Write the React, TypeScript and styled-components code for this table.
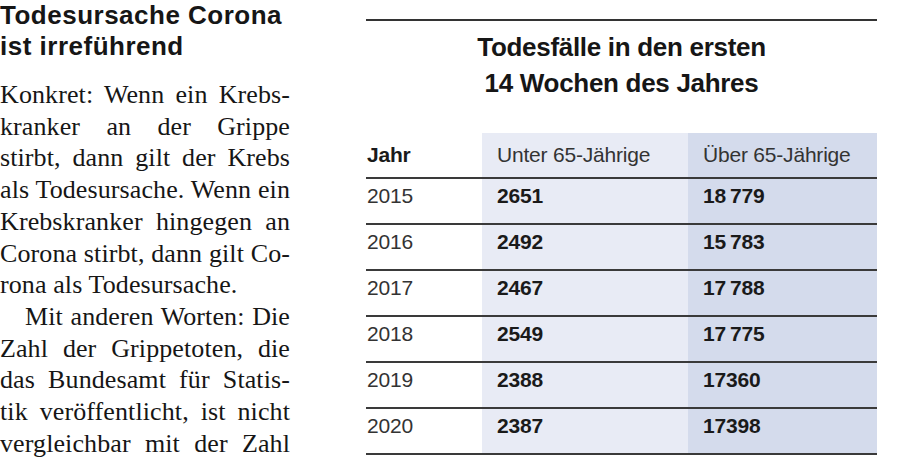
import React from "react";
import styled, { createGlobalStyle } from "styled-components";

const Global = createGlobalStyle`
  html, body { margin: 0; padding: 0; background: #ffffff; }
  body { width: 916px; height: 472px; overflow: hidden; }
`;

const Page = styled.div`
  display: flex;
  align-items: flex-start;
  width: 916px;
  height: 472px;
  background: #ffffff;
`;

const Article = styled.article`
  flex: none;
  width: 290px;
  color: #161616;
`;

const Headline = styled.h2`
  margin: 0;
  font-family: "Liberation Sans", Arial, sans-serif;
  font-weight: 700;
  font-size: 26px;
  line-height: 31px;
  letter-spacing: 0.5px;
  color: #161616;
`;

const Body = styled.div`
  margin-top: 17px;
  font-family: "Liberation Serif", "Times New Roman", serif;
  font-size: 26px;
  line-height: 31.7px;
  letter-spacing: 0.1px;
`;

const Paragraph = styled.p`
  margin: 0;
`;

const Line = styled.span<{ $last?: boolean; $indent?: boolean }>`
  display: block;
  white-space: nowrap;
  text-align: ${(p) => (p.$last ? "left" : "justify")};
  text-align-last: ${(p) => (p.$last ? "left" : "justify")};
  padding-left: ${(p) => (p.$indent ? "25px" : "0")};
`;

const Panel = styled.section`
  flex: none;
  margin-left: 76px;
  width: 511px;
  padding-top: 19px;
`;

const Rule = styled.div`
  height: 2px;
  background: #333333;
`;

const Title = styled.h1`
  margin: 8px 0 32px;
  text-align: center;
  font-family: "Liberation Sans", Arial, sans-serif;
  font-weight: 700;
  font-size: 26px;
  line-height: 36px;
  letter-spacing: -0.3px;
  color: #161616;
`;

const Table = styled.table`
  width: 100%;
  border-collapse: separate;
  border-spacing: 0;
  table-layout: fixed;
  font-family: "Liberation Sans", Arial, sans-serif;
  font-size: 21px;
  line-height: 20px;
  letter-spacing: -0.2px;
`;

const bg = ["transparent", "#e8ebf5", "#d4dbec"];

const Cell = styled.td<{ $col: number; $bold?: boolean; $head?: boolean }>`
  background: ${(p) => bg[p.$col]};
  padding: ${(p) => (p.$head ? "12px 0 12px" : "7px 0 17px")};
  padding-left: ${(p) => (p.$col === 0 ? "1px" : "15px")};
  border-bottom: 2px solid #3a3a3a;
  font-weight: ${(p) => (p.$bold ? 700 : 400)};
  color: ${(p) => (p.$bold ? "#1a1a1a" : "#333333")};
  white-space: nowrap;
  text-align: left;
`;

const rows: [string, string, string][] = [
  ["2015", "2651", "18\u2009779"],
  ["2016", "2492", "15\u2009783"],
  ["2017", "2467", "17\u2009788"],
  ["2018", "2549", "17\u2009775"],
  ["2019", "2388", "17360"],
  ["2020", "2387", "17398"],
];

export default function App() {
  return (
    <>
      <Global />
      <Page>
        <Article>
          <Headline>
            Todesursache Corona
            <br />
            ist irreführend
          </Headline>
          <Body>
            <Paragraph>
              <Line>Konkret: Wenn ein Krebs-</Line>
              <Line>kranker an der Grippe</Line>
              <Line>stirbt, dann gilt der Krebs</Line>
              <Line>als Todesursache. Wenn ein</Line>
              <Line>Krebskranker hingegen an</Line>
              <Line>Corona stirbt, dann gilt Co-</Line>
              <Line $last>rona als Todesursache.</Line>
            </Paragraph>
            <Paragraph>
              <Line $indent>Mit anderen Worten: Die</Line>
              <Line>Zahl der Grippetoten, die</Line>
              <Line>das Bundesamt für Statis-</Line>
              <Line>tik veröffentlicht, ist nicht</Line>
              <Line>vergleichbar mit der Zahl</Line>
            </Paragraph>
          </Body>
        </Article>
        <Panel>
          <Rule />
          <Title>
            Todesfälle in den ersten
            <br />
            14 Wochen des Jahres
          </Title>
          <Table>
            <colgroup>
              <col style={{ width: 116 }} />
              <col style={{ width: 206 }} />
              <col style={{ width: 189 }} />
            </colgroup>
            <thead>
              <tr>
                <Cell as="th" $col={0} $head $bold>
                  Jahr
                </Cell>
                <Cell as="th" $col={1} $head>
                  Unter 65-Jährige
                </Cell>
                <Cell as="th" $col={2} $head>
                  Über 65-Jährige
                </Cell>
              </tr>
            </thead>
            <tbody>
              {rows.map(([y, a, b]) => (
                <tr key={y}>
                  <Cell $col={0}>{y}</Cell>
                  <Cell $col={1} $bold>
                    {a}
                  </Cell>
                  <Cell $col={2} $bold>
                    {b}
                  </Cell>
                </tr>
              ))}
            </tbody>
          </Table>
        </Panel>
      </Page>
    </>
  );
}
